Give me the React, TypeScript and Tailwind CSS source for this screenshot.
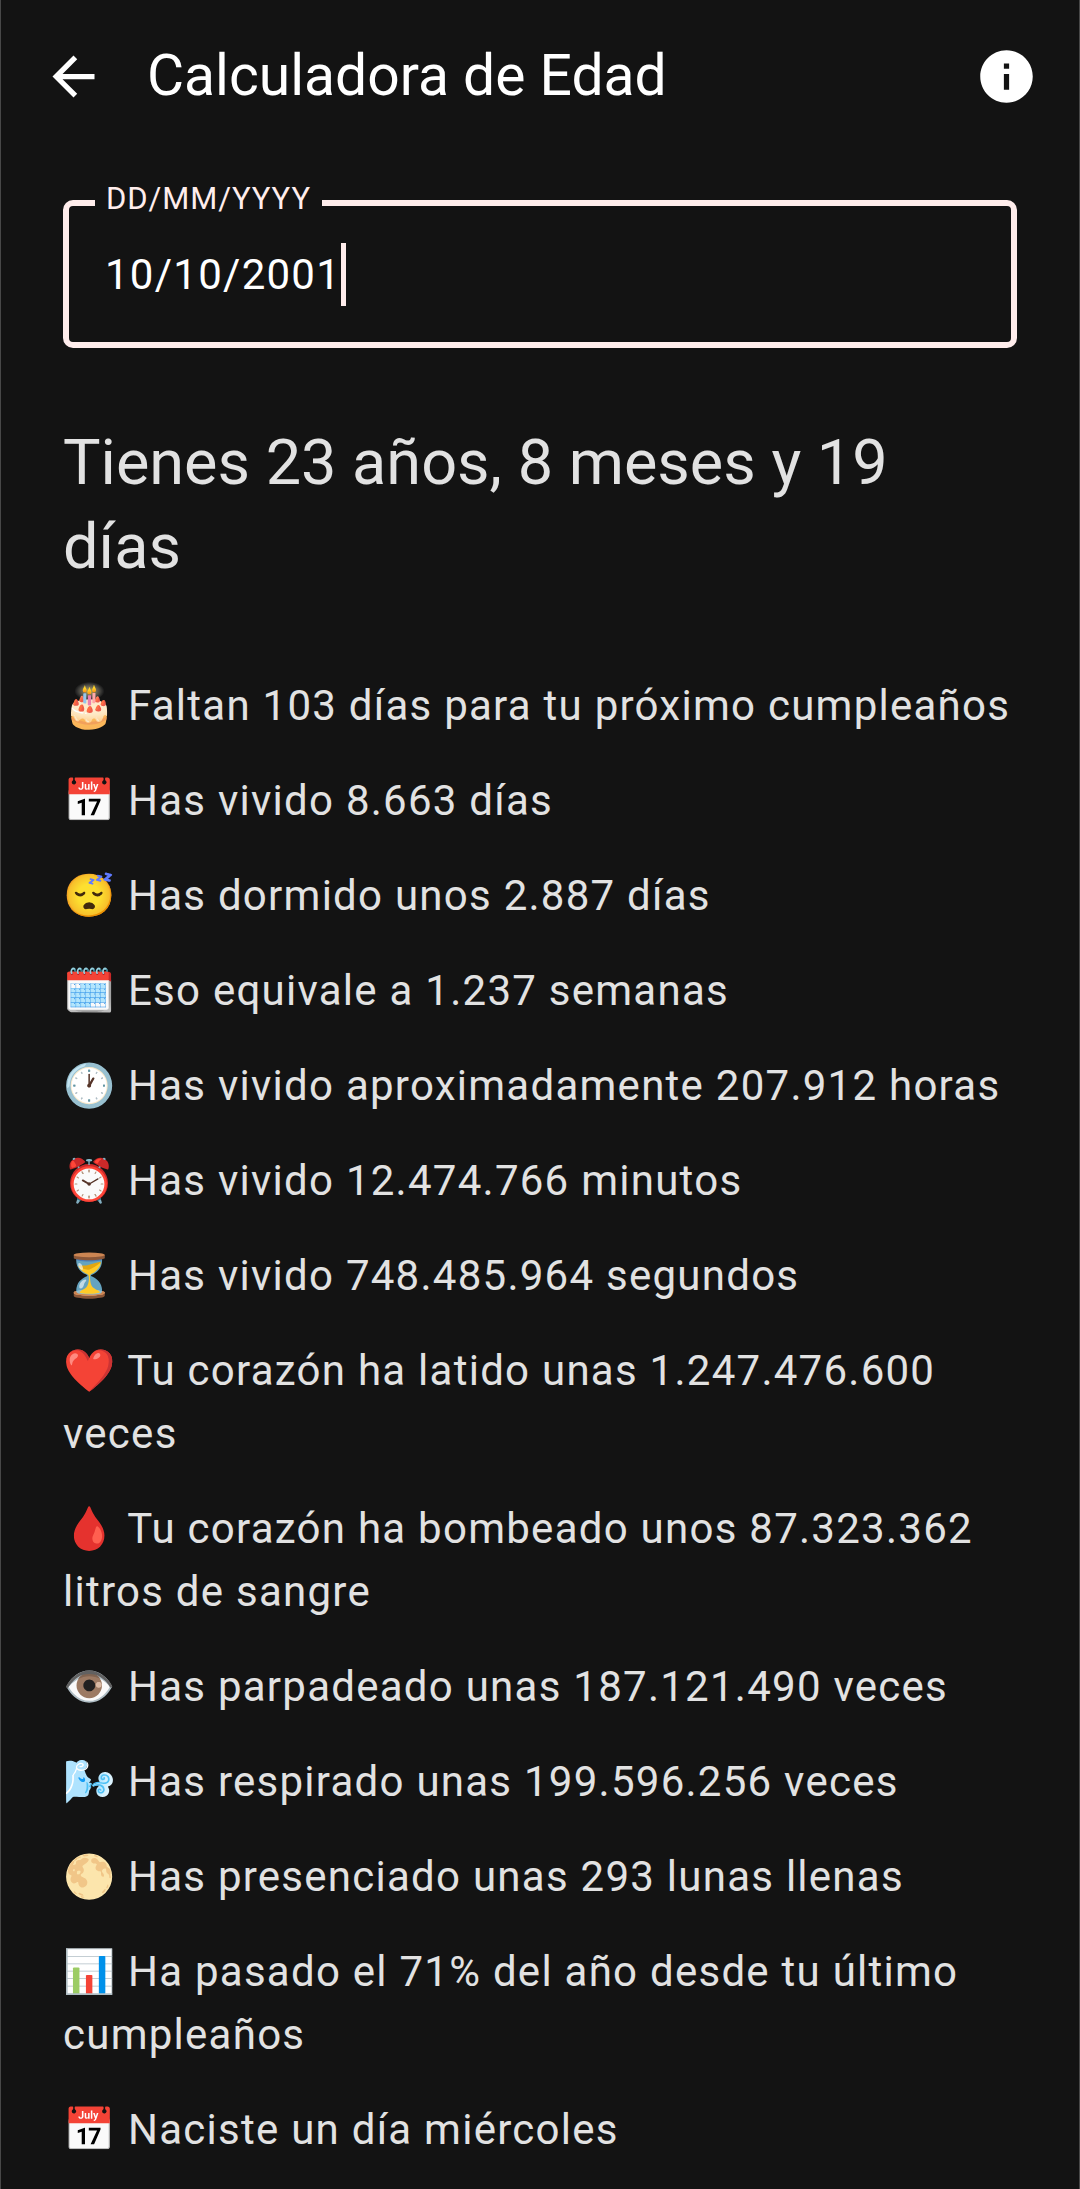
import { useState } from "react";

const facts = [
  { icon: "🎂", text: "Faltan 103 días para tu próximo cumpleaños" },
  { icon: "📅", text: "Has vivido 8.663 días" },
  { icon: "😴", text: "Has dormido unos 2.887 días" },
  { icon: "🗓️", text: "Eso equivale a 1.237 semanas" },
  { icon: "🕐", text: "Has vivido aproximadamente 207.912 horas" },
  { icon: "⏰", text: "Has vivido 12.474.766 minutos" },
  { icon: "⏳", text: "Has vivido 748.485.964 segundos" },
  { icon: "❤️", text: "Tu corazón ha latido unas 1.247.476.600 veces" },
  { icon: "🩸", text: "Tu corazón ha bombeado unos 87.323.362 litros de sangre" },
  { icon: "👁️", text: "Has parpadeado unas 187.121.490 veces" },
  { icon: "🌬️", text: "Has respirado unas 199.596.256 veces" },
  { icon: "🌕", text: "Has presenciado unas 293 lunas llenas" },
  { icon: "📊", text: "Ha pasado el 71% del año desde tu último cumpleaños" },
  { icon: "📅", text: "Naciste un día miércoles" },
];

function TopBar() {
  return (
    <header className="flex items-center gap-[42px] px-[41px] pt-9 text-white">
      <button type="button" aria-label="Volver" className="shrink-0">
        <svg viewBox="0 0 24 24" fill="currentColor" className="size-[63px]">
          <path d="M20 11H7.83l5.59-5.59L12 4l-8 8 8 8 1.41-1.41L7.83 13H20v-2z" />
        </svg>
      </button>
      <h1 className="grow text-[57px] leading-[80px]">Calculadora de Edad</h1>
      <button type="button" aria-label="Información" className="shrink-0">
        <svg viewBox="0 0 24 24" fill="currentColor" className="size-[63px]">
          <path d="M12 2C6.48 2 2 6.48 2 12s4.48 10 10 10 10-4.48 10-10S17.52 2 12 2zm1 15h-2v-6h2v6zm0-8h-2V7h2v2z" />
        </svg>
      </button>
    </header>
  );
}

function DateField() {
  const [value, setValue] = useState("10/10/2001");
  return (
    <fieldset className="rounded-[10px] border-6 border-[#ffedec] px-[26px] pb-9">
      <legend className="px-[11px] pb-2 text-[31px] leading-[42px] tracking-[0.03em] text-[#ffedec]">
        <label htmlFor="birthdate">DD/MM/YYYY</label>
      </legend>
      <div className="flex items-center px-[10px] pt-[15px]">
        <input
          id="birthdate"
          type="text"
          inputMode="numeric"
          value={value}
          onChange={(e) => setValue(e.target.value)}
          className="field-sizing-content h-[63px] max-w-full bg-transparent text-[42px] leading-[63px] tracking-[0.03em] text-white caret-transparent outline-none"
        />
        <span aria-hidden="true" className="h-[63px] w-[5px] shrink-0 bg-[#ffedec]" />
      </div>
    </fieldset>
  );
}

export default function App() {
  return (
    <div className="min-h-screen border-x border-[#484848] bg-[#131313] font-['Roboto',sans-serif] text-[#e2e2e2]">
      <TopBar />
      <main className="px-[62px] pt-[62px] pb-7">
        <DateField />
        <h2 className="mt-[73px] text-[63px] leading-[84px]">Tienes 23 años, 8 meses y 19 días</h2>
        <ul className="mt-[85px] flex flex-col gap-8 text-[42px] leading-[63px] tracking-[0.03em]">
          {facts.map(({ icon, text }) => (
            <li key={text}>
              {icon} {text}
            </li>
          ))}
        </ul>
      </main>
    </div>
  );
}
